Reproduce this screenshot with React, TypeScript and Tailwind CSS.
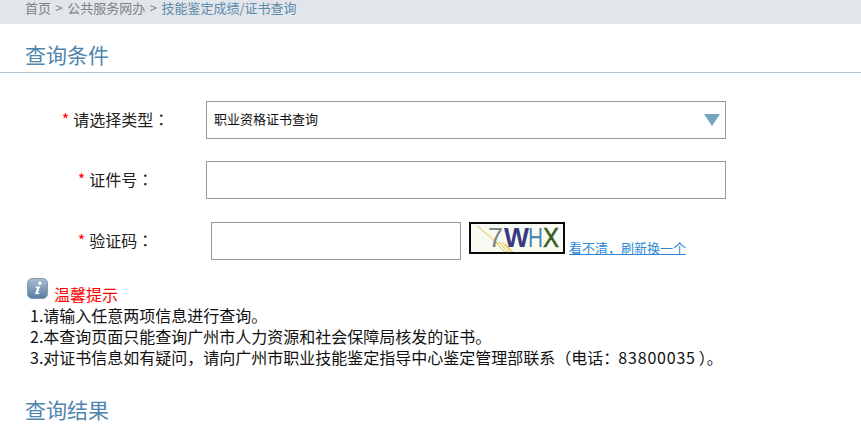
import React from 'react';

const font = { fontFamily: '"Microsoft YaHei", "Noto Sans CJK SC", "Liberation Sans", sans-serif' };

function Label({ text }: { text: string }) {
  return (
    <div className="ml-[28px] w-[175px] shrink-0 flex justify-center items-center text-[16px] leading-[24px] text-[#222] -translate-y-px">
      <span className="text-[#f00] mr-[4px]">*</span>
      <span>{text}</span>
      <span className="font-['Noto_Sans_CJK_TC'] w-[16px]">：</span>
    </div>
  );
}

function Captcha() {
  return (
    <svg width="96" height="32" viewBox="0 0 96 32" className="block">
      <rect x="1" y="1" width="94" height="30" fill="#f8fbf4" stroke="#0a0a0a" strokeWidth="2" />
      <path d="M8 4 L30 22" stroke="#e6d98a" strokeWidth="1.5" />
      <path d="M27 21 L36 30 M30 20 L39 30 M33 20 L42 30 M36 22 L44 30" stroke="#e5c230" strokeWidth="1" />
      <text x="19" y="25" fontSize="27" fontFamily="Liberation Sans" fill="#7c8880" textLength="15" lengthAdjust="spacingAndGlyphs">7</text>
      <text x="35" y="25" fontSize="27" fontFamily="Liberation Sans" fontWeight="700" fill="#3a3a82" textLength="25" lengthAdjust="spacingAndGlyphs">W</text>
      <text x="59" y="25" fontSize="27" fontFamily="Liberation Sans" fill="#4f86ad" textLength="15" lengthAdjust="spacingAndGlyphs">H</text>
      <text x="74" y="25" fontSize="27" fontFamily="Liberation Sans" fill="#3c5a1c" stroke="#3c5a1c" strokeWidth="0.5" textLength="16" lengthAdjust="spacingAndGlyphs">X</text>
    </svg>
  );
}

function InfoIcon() {
  return (
    <svg width="21" height="21" viewBox="0 0 22 22" className="block shrink-0">
      <defs>
        <linearGradient id="info" x1="0" y1="0" x2="0" y2="1">
          <stop offset="0" stopColor="#a9bfd3" />
          <stop offset="1" stopColor="#557c9f" />
        </linearGradient>
      </defs>
      <rect x="0.5" y="0.5" width="21" height="21" rx="5" fill="url(#info)" stroke="#7d97ad" />
      <circle cx="13.5" cy="5.5" r="1.8" fill="#fff" />
      <path d="M9.3 9 L13.6 8.7 L11.6 15.6 L13.2 15.4 L12.9 16.8 L8.4 17.1 L10.5 10.4 L9 10.4 Z" fill="#fff" />
    </svg>
  );
}

export default function App() {
  return (
    <div className="w-[861px] h-[428px] overflow-hidden bg-white" style={font}>
      <div className="h-[24px] bg-[#e2e5e9] pl-[25px] flex items-start text-[13px] leading-[16px] text-[#7d8388]">
        <span>首页</span>
        <span className="mx-[4.5px]">&gt;</span>
        <span>公共服务网办</span>
        <span className="mx-[4.5px]">&gt;</span>
        <span className="text-[#5b8bad]">技能鉴定成绩/证书查询</span>
      </div>

      <div className="h-[49px] border-b border-[#b4c6d6] pl-[25px] pt-[15px] text-[21px] leading-[30px] text-[#4f85ad]">
        查询条件
      </div>

      <div className="mt-[28px] flex items-center h-[38px]">
        <Label text="请选择类型" />
        <div className="ml-[3px] w-[520px] h-[38px] border border-[#999] flex items-center justify-between pl-[7px] pr-[5px] text-[13px] leading-[34px] text-[#111]">
          <span className="-translate-y-px">职业资格证书查询</span>
          <svg width="16" height="12" viewBox="0 0 16 12">
            <path d="M0 0 H16 L8 12 Z" fill="#76a3bd" />
          </svg>
        </div>
      </div>

      <div className="mt-[22px] flex items-center h-[38px]">
        <Label text="证件号" />
        <div className="ml-[3px] w-[520px] h-[38px] border border-[#999]" />
      </div>

      <div className="mt-[23px] flex items-start h-[38px]">
        <div className="h-[38px] flex">
          <Label text="验证码" />
        </div>
        <div className="ml-[8px] w-[250px] h-[38px] border border-[#999]" />
        <div className="ml-[8px]">
          <Captcha />
        </div>
        <a className="ml-[4px] mt-[16px] text-[13px] leading-[20px] text-[#2b87d8] underline">看不清，刷新换一个</a>
      </div>

      <div className="mt-[18px] pl-[27px] flex items-start h-[27px]">
        <InfoIcon />
        <span className="ml-[6px] mt-[6px] text-[16px] leading-[21px] text-[#f00]">温馨提示</span>
      </div>

      <div className="pl-[30px] text-[16px] leading-[21px] text-[#111]">
        <p>1.请输入任意两项信息进行查询。</p>
        <p>2.本查询页面只能查询广州市人力资源和社会保障局核发的证书。</p>
        <p>
          3.对证书信息如有疑问，请向广州市职业技能鉴定指导中心鉴定管理部联系（电话：
          <span className="tracking-[0.8px] ml-[-1px]">83800035</span>
          <span className="ml-[3px]">）。</span>
        </p>
      </div>

      <div className="mt-[26px] pl-[25px] text-[21px] leading-[30px] text-[#4f85ad]">查询结果</div>
    </div>
  );
}
